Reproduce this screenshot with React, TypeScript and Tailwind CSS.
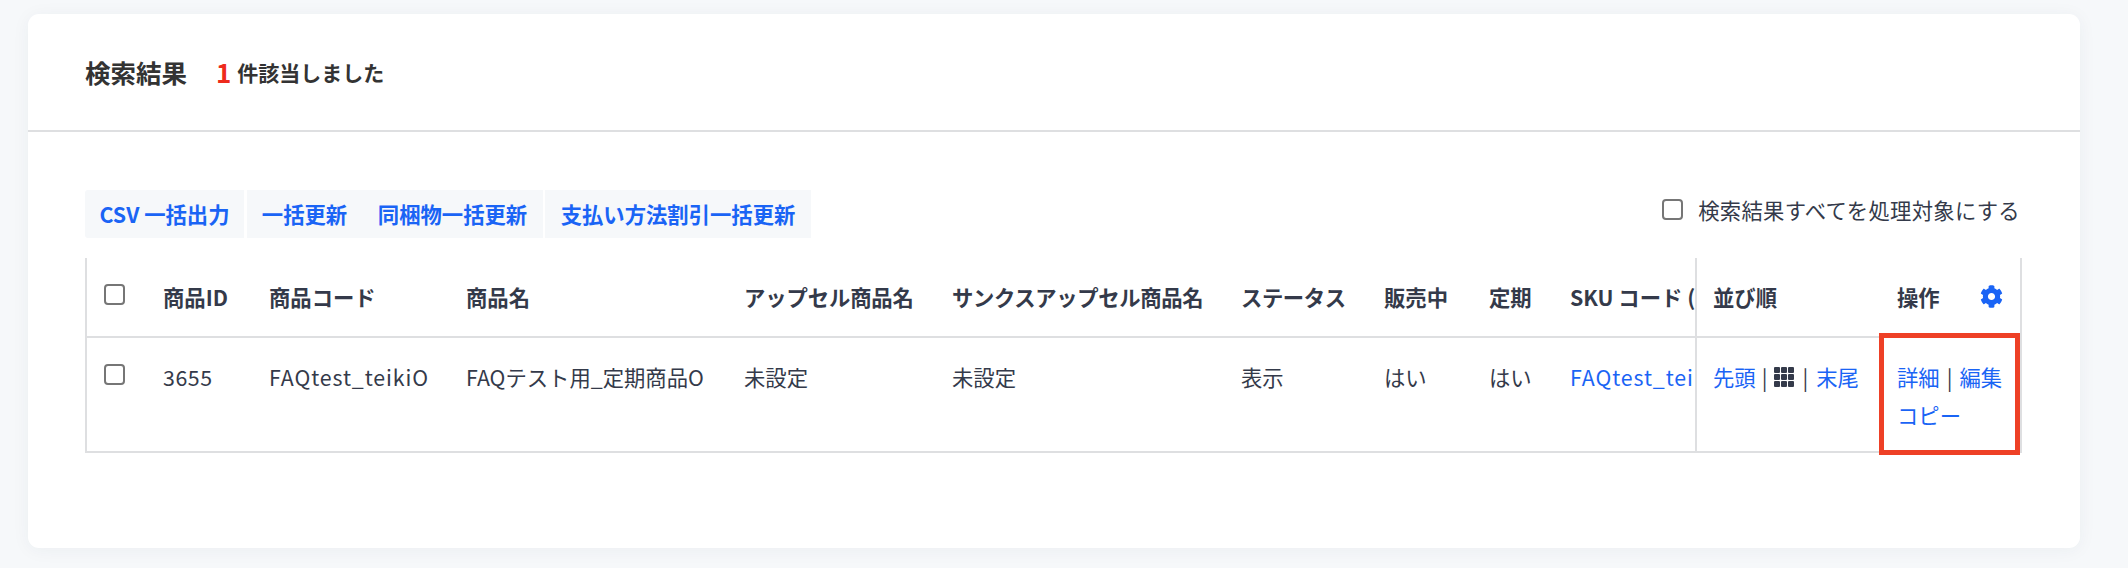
import { FaCog } from 'react-icons/fa';

const FONT = "font-['Noto_Sans_CJK_JP','Noto_Sans',sans-serif]";

const columns = [
  { label: '商品ID', className: 'w-[106px]' },
  { label: '商品コード', className: 'w-[197px]' },
  { label: '商品名', className: 'w-[278px]' },
  { label: 'アップセル商品名', className: 'w-[208px] tracking-[-0.1px]' },
  { label: 'サンクスアップセル商品名', className: 'w-[289px] tracking-[-0.33px]' },
  { label: 'ステータス', className: 'w-[143px] tracking-[-0.4px]' },
  { label: '販売中', className: 'w-[105px]' },
  { label: '定期', className: 'w-[81px]' }
];

const cells = [
  { text: '3655', className: 'tracking-[0.6px]' },
  { text: 'FAQtest_teikiO', className: 'tracking-[0.9px]' },
  { text: 'FAQテスト用_定期商品O', className: '' },
  { text: '未設定', className: '' },
  { text: '未設定', className: '' },
  { text: '表示', className: '' },
  { text: 'はい', className: '' },
  { text: 'はい', className: '' }
];

const actions = [
  { label: 'CSV 一括出力', className: 'mr-[3px] w-[159px] rounded-l-[3px]' },
  { label: '一括更新', className: 'w-[115px]' },
  { label: '同梱物一括更新', className: 'mr-[2px] w-[181px]' },
  { label: '支払い方法割引一括更新', className: 'w-[266px]' }
];

function Checkbox() {
  return (
    <input
      type="checkbox"
      className="block h-[21px] w-[21px] appearance-none rounded-[4px] border-2 border-[#767676] bg-white"
    />
  );
}

function Pipe({ className = 'mx-[7px]' }: { className?: string }) {
  return <span className={`text-[#343a4a] ${className}`}>|</span>;
}

function GridIcon() {
  return (
    <svg viewBox="0 0 20 20" className="h-[20px] w-[20px] fill-[#343a4a]">
      {[0, 7, 14].map((y) =>
        [0, 7, 14].map((x) => <rect key={`${x}-${y}`} x={x} y={y} width="6" height="6" rx="1" />)
      )}
    </svg>
  );
}

export default function App() {
  return (
    <main className={`h-[568px] w-[2128px] overflow-hidden bg-[#f6f8fa] pl-[28px] pt-[14px] ${FONT}`}>
      <section className="h-[534px] w-[2052px] rounded-[11px] bg-white shadow-[0_2px_18px_rgba(30,50,80,0.05)]">
        {/* header */}
        <div className="flex h-[118px] items-center border-b-2 border-[#dedfe1] pl-[57px] text-[#333333]">
          <h2 className="text-[25.5px] font-bold leading-none">検索結果</h2>
          <span className="ml-[29px] text-[26px] font-bold leading-none text-[#ee2b1c]">1</span>
          <span className="ml-[6px] text-[21px] font-bold leading-none">件該当しました</span>
        </div>

        <div className="pl-[57px] pr-[60px] pt-[58px]">
          {/* bulk actions */}
          <div className="flex h-[48px] items-stretch justify-between">
            <div className="flex">
              {actions.map((action) => (
                <a
                  key={action.label}
                  className={`flex items-center justify-center whitespace-nowrap bg-[#f6f8fa] text-[21.33px] font-bold text-[#1a64f5] ${action.className}`}
                >
                  {action.label}
                </a>
              ))}
            </div>
            <label className="flex items-center gap-[15px] pb-[9px] text-[21.33px] tracking-[0.3px] text-[#343a4a]">
              <Checkbox />
              検索結果すべてを処理対象にする
            </label>
          </div>

          {/* table */}
          <table className="mt-[20px] w-[1937px] table-fixed border-separate border-spacing-0 text-[21.33px] text-[#343a4a]">
            <thead>
              <tr className="h-[80px]">
                <th className="w-[60px] border-b-2 border-l-2 border-[#dedfe1] pb-[5px] pl-[17px] align-middle">
                  <Checkbox />
                </th>
                {columns.map((col) => (
                  <th
                    key={col.label}
                    className={`${col.className} overflow-hidden whitespace-nowrap border-b-2 border-[#dedfe1] pl-[18px] text-left font-bold`}
                  >
                    {col.label}
                  </th>
                ))}
                <th className="w-[143px] overflow-hidden whitespace-nowrap border-b-2 border-[#dedfe1] pl-[18px] text-left font-bold">
                  SKU コード (1)
                </th>
                <th className="w-[184px] border-b-2 border-l-2 border-[#dedfe1] pl-[16px] text-left font-bold">
                  並び順
                </th>
                <th className="w-[143px] border-b-2 border-r-2 border-[#dedfe1] pl-[18px] text-left font-bold">
                  <div className="flex items-center justify-between pr-[17px]">
                    操作
                    <FaCog className="h-[23px] w-[23px] text-[#1a64f5]" />
                  </div>
                </th>
              </tr>
            </thead>
            <tbody>
              <tr className="h-[115px] align-top leading-[38px]">
                <td className="border-b-2 border-l-2 border-[#dedfe1] pl-[17px] pt-[26px]">
                  <Checkbox />
                </td>
                {cells.map((cell, i) => (
                  <td
                    key={i}
                    className={`overflow-hidden whitespace-nowrap border-b-2 border-[#dedfe1] pl-[18px] pt-[20px] ${cell.className}`}
                  >
                    {cell.text}
                  </td>
                ))}
                <td className="overflow-hidden whitespace-nowrap border-b-2 border-[#dedfe1] pl-[18px] pt-[20px] tracking-[0.9px] text-[#1a64f5]">
                  FAQtest_teikiO
                </td>
                <td className="whitespace-nowrap border-b-2 border-l-2 border-[#dedfe1] pl-[16px] pt-[20px]">
                  <div className="flex items-center text-[#1a64f5]">
                    先頭
                    <Pipe className="ml-[6px] mr-[7px]" />
                    <GridIcon />
                    <Pipe className="mx-[8px]" />
                    末尾
                  </div>
                </td>
                <td className="relative border-b-2 border-r-2 border-[#dedfe1] pl-[18px] pt-[20px]">
                  <div className="flex items-center whitespace-nowrap text-[#1a64f5]">
                    詳細
                    <Pipe />
                    編集
                  </div>
                  <div className="text-[#1a64f5]">コピー</div>
                  {/* callout box */}
                  <div className="absolute -bottom-[4px] -top-[5px] left-0 right-0 border-[5px] border-[#ee4026]" />
                </td>
              </tr>
            </tbody>
          </table>
        </div>
      </section>
    </main>
  );
}
